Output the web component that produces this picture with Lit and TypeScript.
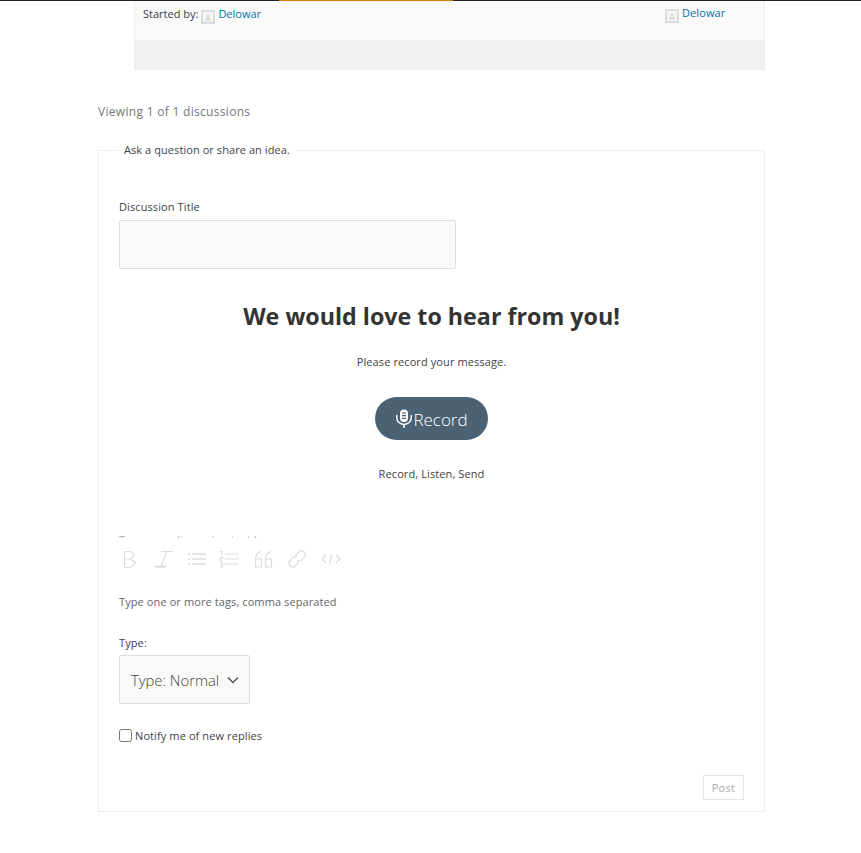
import { html, css, LitElement } from 'lit';
import { customElement } from 'lit/decorators.js';

const avatar = html`
  <svg class="avatar" width="14" height="14" viewBox="0 0 14 14">
    <rect x="0" y="0" width="14" height="14" fill="#ddd"></rect>
    <rect x="2" y="2" width="10" height="10" fill="#f4f4f4"></rect>
    <circle cx="7" cy="6" r="1.6" fill="#d8d8d8"></circle>
    <rect x="4.6" y="8" width="4.8" height="2.4" fill="#d8d8d8"></rect>
  </svg>
`;

@customElement('app-root')
export class AppRoot extends LitElement {
  static styles = css`
    :host {
      display: block;
      width: 861px;
      height: 853px;
      overflow: hidden;
      background: #fff;
      font-family: "Open Sans", "Liberation Sans", sans-serif;
      font-size: 11px;
      letter-spacing: 0.1px;
      color: #3c434a;
    }

    .nav-edge {
      display: flex;
      height: 1px;
      background: #1d2327;
      padding-left: 279px;
    }
    .nav-edge span {
      width: 174px;
      background: #d17a00;
    }

    .page {
      width: 667px;
      margin-left: 98px;
    }

    .topic {
      margin-left: 36px;
      border: 1px solid #eee;
      border-top: none;
    }
    .topic-row {
      display: flex;
      justify-content: space-between;
      height: 39px;
      padding-left: 8px;
      background: #f9f9f9;
      border-bottom: 1px solid #eee;
    }
    .started {
      display: flex;
      align-items: flex-start;
      padding-top: 5px;
      line-height: 15px;
      letter-spacing: 0;
    }
    .last {
      display: flex;
      align-items: flex-start;
      width: 99px;
      padding-top: 4px;
      line-height: 15px;
    }
    .avatar {
      flex: none;
      margin: 4px 3px 0 3px;
    }
    .last .avatar {
      margin: 4px 3px 0 0;
    }
    a {
      color: #0073aa;
      text-decoration: none;
    }
    .topic-foot {
      height: 28px;
      background: #f1f1f1;
    }

    .count {
      margin: 33px 0 0;
      font-size: 12px;
      line-height: 17px;
      letter-spacing: 0.3px;
      color: #72777c;
    }

    fieldset {
      margin: 23px 0 0;
      padding: 0 20px;
      height: 669px;
      box-sizing: border-box;
      border: 1px solid #eee;
      min-width: 0;
    }
    legend {
      margin-left: 0;
      padding: 0 5px;
      line-height: 15px;
      font-size: 11px;
      letter-spacing: 0.07px;
      color: #3c434a;
    }
    legend span {
      display: block;
      margin: -1px 0 1px;
    }

    label {
      display: block;
      line-height: 15px;
    }
    .title-label {
      margin-top: 41px;
    }
    .title-input {
      display: block;
      box-sizing: border-box;
      width: 337px;
      height: 49px;
      margin-top: 6px;
      background: #f9f9f9;
      border: 1px solid #ddd;
      border-radius: 2px;
    }

    .recorder {
      display: flex;
      flex-direction: column;
      align-items: center;
      width: 625px;
    }
    h2 {
      margin: 31px 0 0;
      font-size: 23.25px;
      line-height: 32px;
      font-weight: 700;
      letter-spacing: 0;
      color: #333;
    }
    .prompt {
      margin: 22px 0 0;
      line-height: 15px;
    }
    .record {
      display: flex;
      align-items: center;
      justify-content: center;
      width: 113px;
      height: 43px;
      margin-top: 28px;
      padding: 0;
      border: none;
      border-radius: 22px;
      background: #4a6274;
      color: #fff;
      font-family: inherit;
      font-size: 17px;
      font-weight: 300;
    }
    .record span {
      margin-top: 2px;
    }
    .steps {
      margin: 26px 0 0;
      line-height: 15px;
    }

    .clipped {
      height: 3px;
      margin-top: 54px;
      overflow: hidden;
      color: #aaa;
      line-height: 15px;
    }
    .clipped span {
      display: block;
      margin-top: -3px;
    }

    .toolbar {
      display: flex;
      gap: 11px;
      height: 20px;
      margin-top: 11px;
    }
    .toolbar svg {
      display: block;
      fill: none;
      stroke: #dcdcdc;
      stroke-width: 1.2;
    }

    .tags {
      margin: 25px 0 0;
      line-height: 15px;
      color: #666;
    }
    .type-label {
      margin-top: 26px;
    }
    .select {
      display: flex;
      align-items: center;
      justify-content: space-between;
      box-sizing: border-box;
      width: 131px;
      height: 49px;
      margin-top: 5px;
      padding: 0 10px 0 11px;
      background: #f9f9f9;
      border: 1px solid #ddd;
      border-radius: 2px;
      font-size: 14.8px;
      font-weight: 300;
      letter-spacing: 0;
      color: #444;
    }

    .notify {
      display: flex;
      align-items: center;
      margin-top: 24px;
      line-height: 15px;
    }
    .notify input {
      width: 13px;
      height: 13px;
      margin: 0 3px 0 0;
    }

    .actions {
      display: flex;
      justify-content: flex-end;
      margin-top: 32px;
    }
    .post {
      box-sizing: border-box;
      width: 41px;
      height: 25px;
      padding: 0;
      background: #fff;
      border: 1px solid #e5e5e5;
      color: #a7aaad;
      font-family: inherit;
      font-size: 11px;
      letter-spacing: 0.3px;
    }
  `;

  render() {
    return html`
      <div class="nav-edge"><span></span></div>
      <div class="page">
        <section class="topic">
          <div class="topic-row">
            <div class="started">Started by: ${avatar}<a href="#">Delowar</a></div>
            <div class="last">${avatar}<a href="#">Delowar</a></div>
          </div>
          <div class="topic-foot"></div>
        </section>

        <p class="count">Viewing 1 of 1 discussions</p>

        <fieldset>
          <legend><span>Ask a question or share an idea.</span></legend>
          <label class="title-label">Discussion Title</label>
          <div class="title-input"></div>

          <div class="recorder">
            <h2>We would love to hear from you!</h2>
            <p class="prompt">Please record your message.</p>
            <button class="record">
              <svg width="18" height="20" viewBox="0 0 18 20" fill="none" stroke="#fff">
                <rect x="5" y="0.500" width="8" height="12.500" rx="4" fill="#fff" stroke="none"></rect>
                <path d="M7 4h4M7 6.700h4M7 9.400h4" stroke="#4a6274" stroke-width="1.200"></path>
                <path d="M1.800 6v3a7.200 6.500 0 0 0 14.400 0V6" stroke-width="1.400"></path>
                <path d="M9 15.500v3.500" stroke-width="1.500"></path>
              </svg>
              <span>Record</span>
            </button>
            <p class="steps">Record, Listen, Send</p>
          </div>

          <div class="clipped"><span>Type your discussion text here...</span></div>

          <div class="toolbar">
            <svg width="22" height="20" viewBox="0 0 22 20">
              <path d="M5.500 2.500h6l4 3.500-4 4H5.500zM11.500 10l5 3.500-5 5h-6"></path>
              <path d="M5.500 10v8.500"></path>
            </svg>
            <svg width="22" height="20" viewBox="0 0 22 20">
              <path d="M9 2.500h12M3 18h11M14.500 3 9 18"></path>
              <path d="M3 17.500h11" stroke-width="2"></path>
            </svg>
            <svg width="22" height="20" viewBox="0 0 22 20">
              <path d="M7 5h14M7 10h14M7 15h14M3 5h2M3 10h2M3 15h2" stroke-width="1.500"></path>
            </svg>
            <svg width="22" height="20" viewBox="0 0 22 20">
              <path d="M6.500 5h14M6.500 10h14M6.500 15h14M2 2.500h2v3M2 8h2.500v1.500H2V12h2.500M2 14h2.500v4H2" stroke-width="1.200"></path>
            </svg>
            <svg width="24" height="20" viewBox="0 0 24 20">
              <path d="M10 2.500C6 3.500 4.500 6 4.500 10v8h6v-8h-6M20 2.500c-4 1-5.500 3.500-5.500 7.500v8h6v-8h-6"></path>
            </svg>
            <svg width="22" height="20" viewBox="0 0 22 20">
              <path d="M10 8H7l-4 5c-1 3 2 6 5 5l4-4v-3"></path>
              <path d="M12 12h3l4-5c1-3-2-6-5-5l-4 4v3"></path>
            </svg>
            <svg width="22" height="20" viewBox="0 0 22 20">
              <path d="M7 6 3 10l4 4M17 6l4 4-4 4M13 5 10.500 15"></path>
            </svg>
          </div>

          <p class="tags">Type one or more tags, comma separated</p>

          <label class="type-label">Type:</label>
          <div class="select">
            <span>Type: Normal</span>
            <svg width="12" height="8" viewBox="0 0 12 8" fill="none" stroke="#555" stroke-width="1.500">
              <path d="M1 1.500 6 6.500l5-5"></path>
            </svg>
          </div>

          <label class="notify"><input type="checkbox" />Notify me of new replies</label>

          <div class="actions"><button class="post">Post</button></div>
        </fieldset>
      </div>
    `;
  }
}
